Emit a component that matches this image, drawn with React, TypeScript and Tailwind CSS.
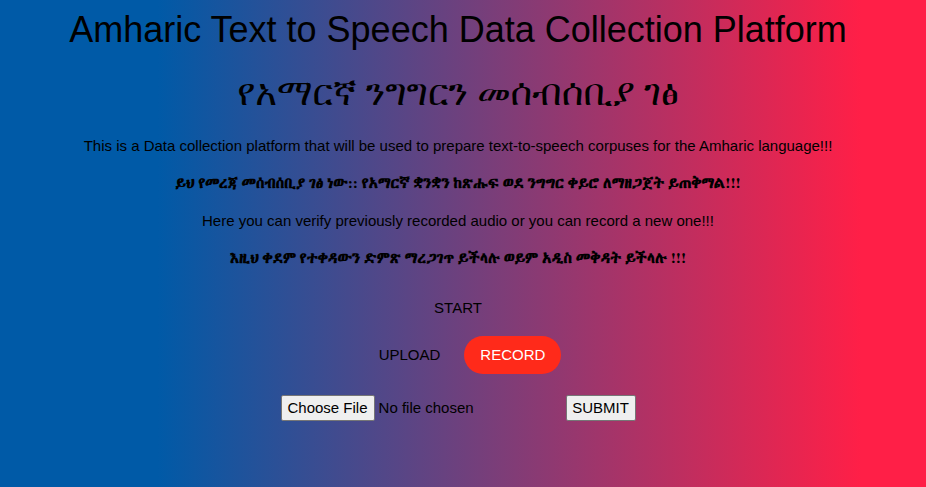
export default function App() {
  return (
    <div className="min-h-screen w-full bg-[linear-gradient(90deg,#005aa7_17%,#ff1f47_93%)] font-['Liberation_Sans',Arial,sans-serif] text-black text-center flex flex-col items-center pr-[10px]">
      <h1 className="mt-[9px] text-[36px] leading-[41px] font-normal">
        Amharic Text to Speech Data Collection Platform
      </h1>
      <h2 className="mt-[24px] text-[37px] leading-[40px] font-normal font-['FreeSerif','Abyssinica_SIL','Noto_Serif_Ethiopic',serif]">
        የአማርኛ ንግግርን መሰብሰቢያ ገፅ
      </h2>
      <p className="mt-[23px] text-[15px] leading-[17px]">
        This is a Data collection platform that will be used to prepare text-to-speech corpuses for the Amharic language!!!
      </p>
      <p className="mt-[21px] text-[15.4px] leading-[17px] font-bold font-['FreeSerif','Abyssinica_SIL',serif]">
        ይህ የመረጃ መሰብሰቢያ ገፅ ነው:: የአማርኛ ቋንቋን ከጽሑፍ ወደ ንግግር ቀይሮ ለማዘጋጀት ይጠቅማል!!!
      </p>
      <p className="mt-[20px] text-[15px] leading-[17px]">
        Here you can verify previously recorded audio or you can record a new one!!!
      </p>
      <p className="mt-[21px] text-[15.4px] leading-[17px] font-bold font-['FreeSerif','Abyssinica_SIL',serif]">
        እዚህ ቀደም የተቀዳውን ድምጽ ማረጋገጥ ይችላሉ ወይም አዲስ መቅዳት ይችላሉ !!!
      </p>
      <div className="mt-[32px] text-[15px] leading-[17px] uppercase">START</div>
      <div className="mt-[20px] ml-[24px] flex items-center gap-[24px]">
        <button className="h-[38px] px-[0px] text-[15px] uppercase">UPLOAD</button>
        <button className="h-[38px] w-[97px] rounded-full bg-[#ff2a1a] text-white text-[15px] uppercase">
          RECORD
        </button>
      </div>
      <div className="mt-[21px] flex items-center">
        <div className="flex items-center w-[285px]">
          <span className="h-[26px] px-[6px] flex items-center bg-[#efefef] border border-[#767676] rounded-[2px] text-[15px]">
            Choose File
          </span>
          <span className="ml-[4px] text-[15px]">No file chosen</span>
        </div>
        <button className="h-[26px] w-[70px] flex items-center justify-center bg-[#efefef] border border-[#767676] rounded-[2px] text-[15px]">
          SUBMIT
        </button>
      </div>
    </div>
  );
}
